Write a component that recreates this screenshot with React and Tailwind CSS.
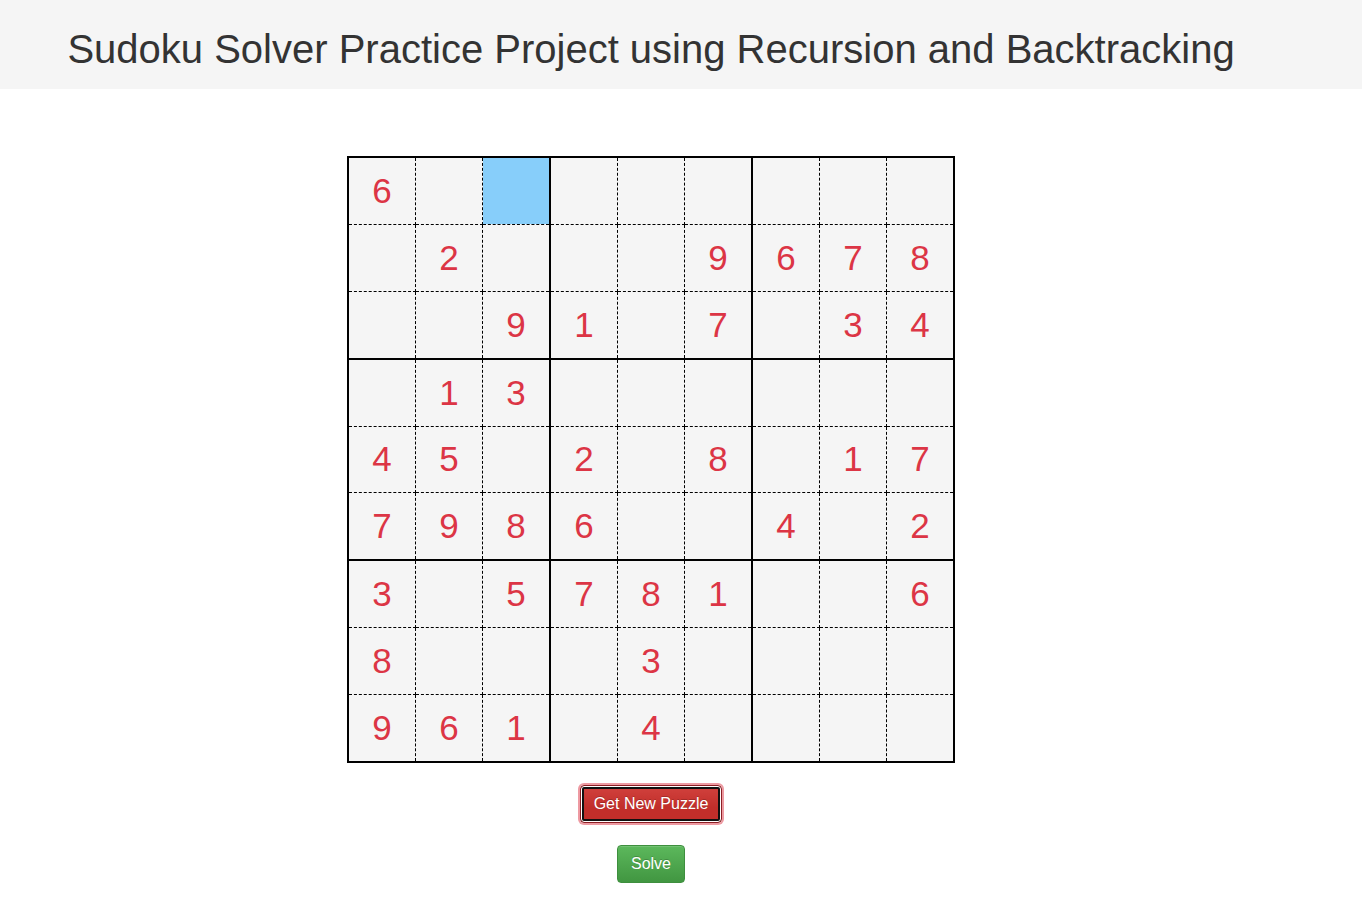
import { useState } from "react";

const PUZZLE = [
  "6........",
  ".2...9678",
  "..91.7.34",
  ".13......",
  "45.2.8.17",
  "7986..4.2",
  "3.5781..6",
  "8...3....",
  "961.4....",
];

function Cell({ row, col, value, selected, onSelect }) {
  const right = col % 3 === 2 ? "border-r-2 [border-right-style:solid]" : "border-r [border-right-style:dashed]";
  const left = col % 3 === 0 ? "border-l-2 [border-left-style:solid]" : "border-l [border-left-style:dashed]";
  const bottom = row % 3 === 2 ? "border-b-2 [border-bottom-style:solid]" : "border-b [border-bottom-style:dashed]";
  const top = row % 3 === 0 ? "border-t-2 [border-top-style:solid]" : "border-t [border-top-style:dashed]";
  return (
    <td
      onClick={onSelect}
      className={`border-black p-0 text-center align-middle text-[35px] leading-[50px] text-[#dc3545] ${left} ${right} ${top} ${bottom} ${selected ? "bg-[#87cefa]" : "bg-[#f5f5f5]"}`}
    >
      {value === "." ? "" : value}
    </td>
  );
}

export default function App() {
  const [selected, setSelected] = useState("0-2");
  return (
    <div className="bg-white font-['Liberation_Sans',Arial,sans-serif] text-[#333333]">
      <header className="bg-[#f5f5f5] pt-6 pr-[60px] pb-[15px]">
        <h1 className="text-center text-[40px] leading-[50px]">
          Sudoku Solver Practice Project using Recursion and Backtracking
        </h1>
      </header>
      <main className="flex flex-col items-center pt-[67px] pr-[60px]">
        <table className="h-[607px] w-[608px] table-fixed border-collapse">
          <tbody>
            {PUZZLE.map((line, r) => (
              <tr key={r}>
                {line.split("").map((v, c) => (
                  <Cell
                    key={c}
                    row={r}
                    col={c}
                    value={v}
                    selected={selected === `${r}-${c}`}
                    onSelect={() => setSelected(`${r}-${c}`)}
                  />
                ))}
              </tr>
            ))}
          </tbody>
        </table>
        <button
          type="button"
          className="mt-[22px] h-[38px] rounded border border-[#8c1f24] bg-linear-to-b from-[#d2423e] to-[#c12e2a] to-60% px-[13px] text-base leading-6 text-white shadow-[inset_0_0_0_1px_#fff,inset_0_0_0_3px_#101010,0_0_0_2px_#ee9aa2] [text-shadow:0_-1px_0_rgba(0,0,0,0.2)]"
        >
          Get New Puzzle
        </button>
        <button
          type="button"
          className="mt-[22px] h-[38px] rounded border border-[#3e8f3e] bg-linear-to-b from-[#5cb85c] to-[#419641] px-[13px] text-base leading-6 text-white shadow-[inset_0_1px_0_rgba(255,255,255,0.15)] [text-shadow:0_-1px_0_rgba(0,0,0,0.2)]"
        >
          Solve
        </button>
      </main>
    </div>
  );
}
